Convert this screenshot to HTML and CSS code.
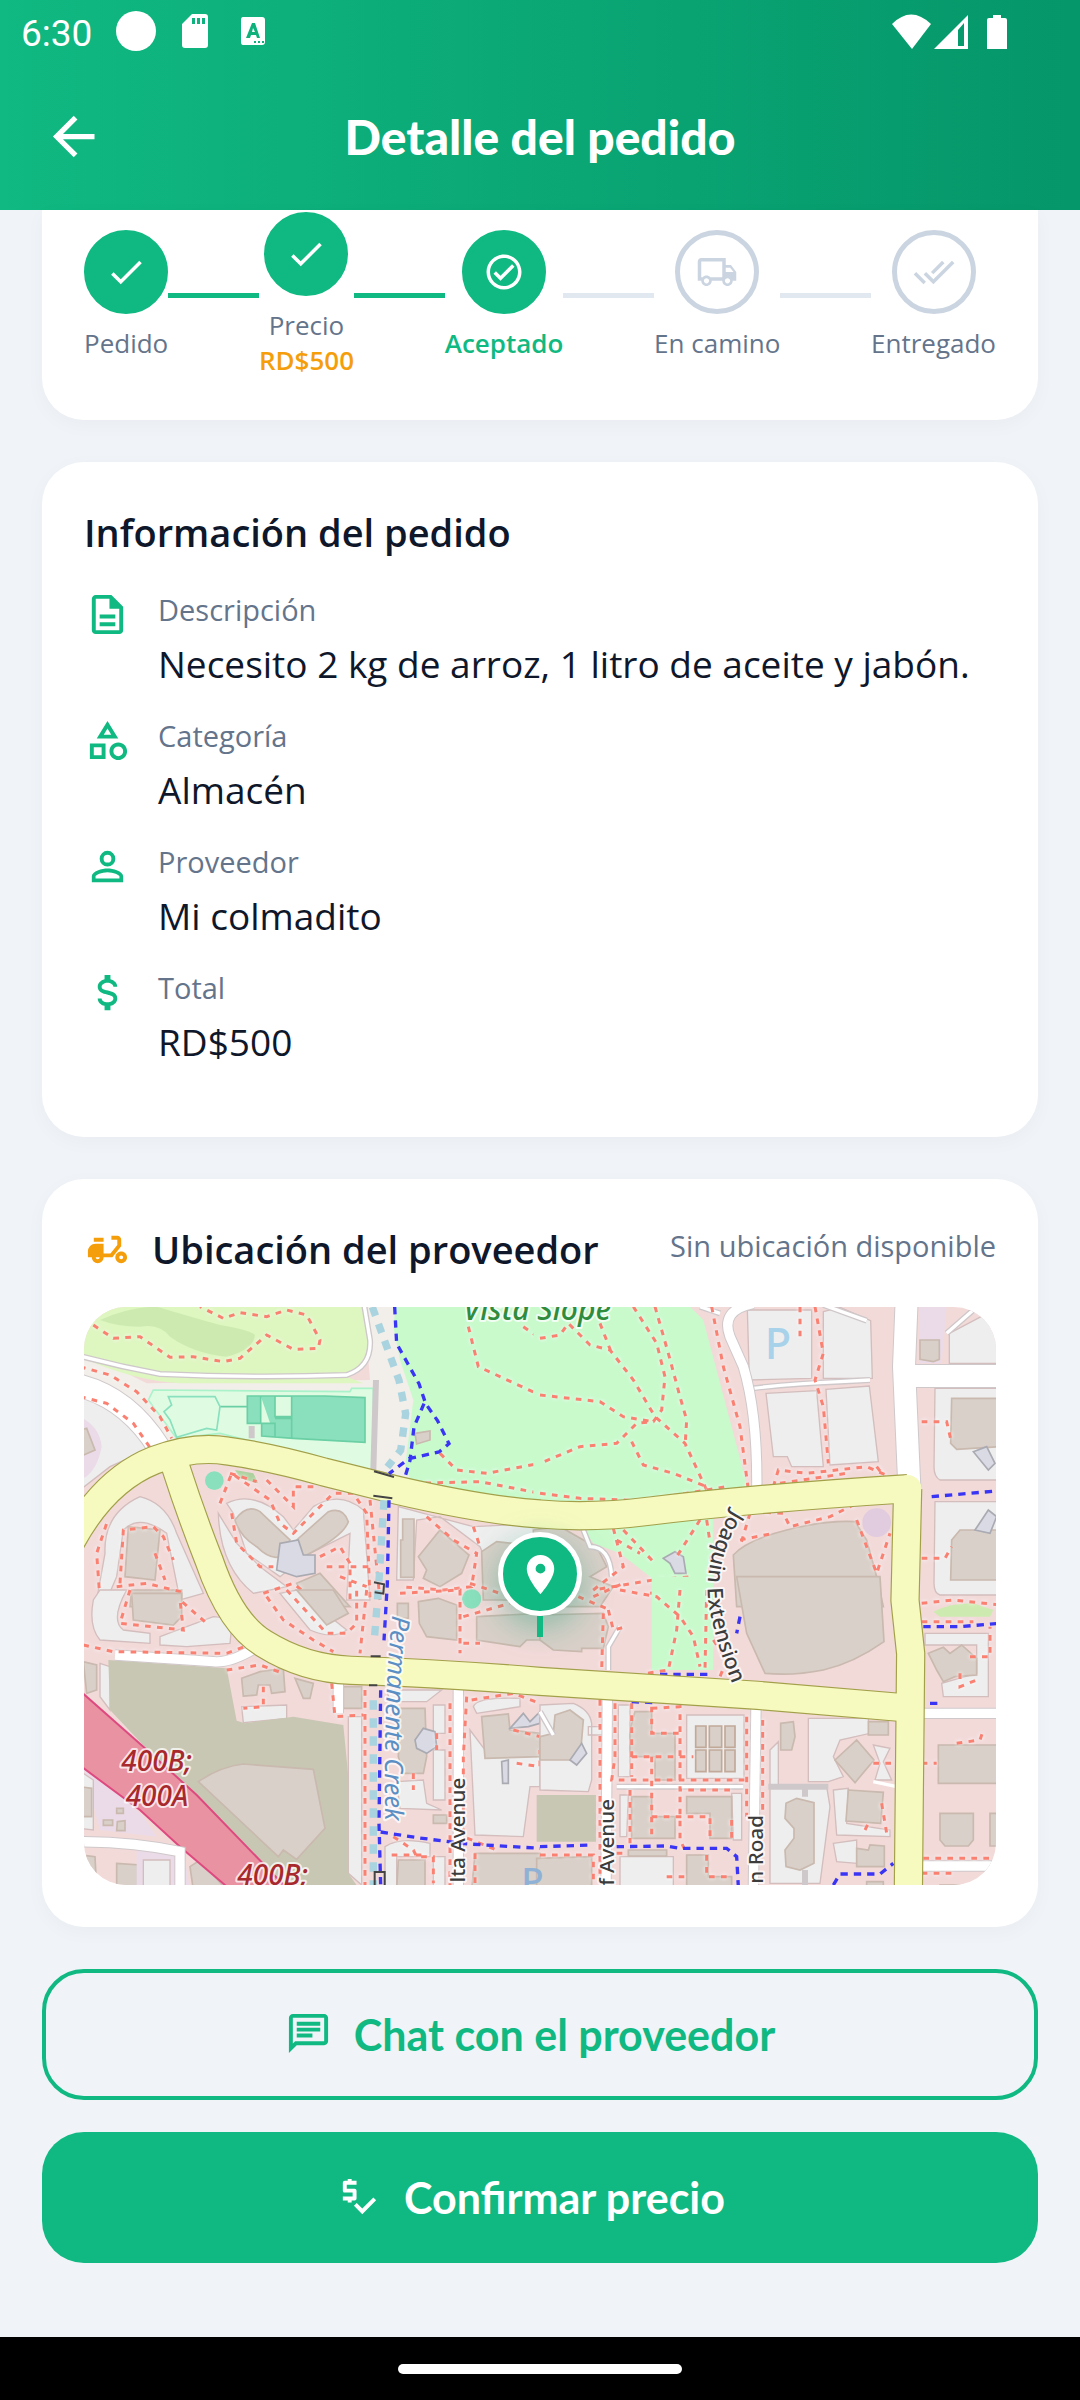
FILE: index.html
```html
<!DOCTYPE html>
<html lang="es">
<head>
<meta charset="utf-8">
<meta name="viewport" content="width=device-width, initial-scale=1">
<title>Detalle del pedido</title>
<link rel="stylesheet" href="styles.css">
</head>
<body>
<header class="header">
  <div class="status">
    <span class="status-time">6:30</span>
    <svg class="status-left" viewBox="0 0 156 44" aria-hidden="true">
      <circle cx="20" cy="21" r="20"/>
      <path fill-rule="evenodd" d="M76 4h13q3 0 3 3v28q0 3-3 3H69q-3 0-3-3V14zM76 8v6h3V8zm5 0v6h3V8zm5 0v6h3V8z"/>
      <path fill-rule="evenodd" d="M127 7h19q3 0 3 3v22q0 3-3 3h-19q-2 0-2-3V10q0-3 2-3zM136 13l-6 15h4l1-3h5l1 3h3l-5-15zm1 5l2 4h-3zM138 31v2h2v-2zm4 0v2h2v-2zm4 0v2h2v-2z"/>
    </svg>
    <svg class="status-right" viewBox="0 0 116 36" aria-hidden="true">
      <path d="M0 10Q19-9 39 10L20 35z"/>
      <path fill-rule="evenodd" d="M76 1v34H42zM66 16v16h6V9z"/>
      <path d="M101 1h8v3h4q2 0 2 2v29H95V6q0-2 2-2h4z"/>
    </svg>
  </div>
  <div class="appbar">
    <button class="back" aria-label="Volver"><svg class="icon-lg" viewBox="0 0 24 24"><path d="M20 11V13H8L13.5 18.5L12.08 19.92L4.16 12L12.08 4.08L13.5 5.5L8 11H20Z"/></svg></button>
    <h1 class="title">Detalle del pedido</h1>
  </div>
</header>

<main class="content">
  <section class="card card-steps">
    <ol class="steps">
      <li class="step"><span class="dot"><svg class="icon-sm" viewBox="0 0 24 24"><path d="M21 7L9 19L3.5 13.5L4.91 12.09L9 16.17L19.59 5.59L21 7Z"/></svg></span><span class="step-name">Pedido</span></li>
      <li class="line line-done" aria-hidden="true"></li>
      <li class="step"><span class="dot"><svg class="icon-sm" viewBox="0 0 24 24"><path d="M21 7L9 19L3.5 13.5L4.91 12.09L9 16.17L19.59 5.59L21 7Z"/></svg></span><span class="step-name">Precio</span><span class="step-price">RD$500</span></li>
      <li class="line line-done" aria-hidden="true"></li>
      <li class="step step-current"><span class="dot"><svg class="icon-sm" viewBox="0 0 24 24"><path d="M12 2C6.5 2 2 6.5 2 12S6.5 22 12 22 22 17.5 22 12 17.5 2 12 2M12 20C7.59 20 4 16.41 4 12S7.59 4 12 4 20 7.59 20 12 16.41 20 12 20M16.59 7.58L10 14.17L7.41 11.59L6 13L10 17L18 9L16.59 7.58Z"/></svg></span><span class="step-name">Aceptado</span></li>
      <li class="line" aria-hidden="true"></li>
      <li class="step step-todo"><span class="dot"><svg class="icon-sm" viewBox="0 0 24 24"><path d="M18 18.5C18.83 18.5 19.5 17.83 19.5 17C19.5 16.17 18.83 15.5 18 15.5C17.17 15.5 16.5 16.17 16.5 17C16.5 17.83 17.17 18.5 18 18.5M19.5 9.5H17V12H21.46L19.5 9.5M6 18.5C6.83 18.5 7.5 17.83 7.5 17C7.5 16.17 6.83 15.5 6 15.5C5.17 15.5 4.5 16.17 4.5 17C4.5 17.83 5.17 18.5 6 18.5M20 8L23 12V17H21C21 18.66 19.66 20 18 20C16.34 20 15 18.66 15 17H9C9 18.66 7.66 20 6 20C4.34 20 3 18.66 3 17H1V6C1 4.89 1.89 4 3 4H17V8H20M3 6V15H3.76C4.31 14.39 5.11 14 6 14C6.89 14 7.69 14.39 8.24 15H15V6H3Z"/></svg></span><span class="step-name">En camino</span></li>
      <li class="line" aria-hidden="true"></li>
      <li class="step step-todo"><span class="dot"><svg class="icon-sm" viewBox="0 0 24 24"><path d="M.41 13.41L6 19L7.41 17.58L1.83 12M22.24 5.58L11.66 16.17L7.5 12L6.07 13.41L11.66 19L23.66 7M18 7L16.59 5.58L10.24 11.93L11.66 13.34L18 7Z"/></svg></span><span class="step-name">Entregado</span></li>
    </ol>
  </section>

  <section class="card">
    <h2 class="heading">Información del pedido</h2>
    <dl class="details">
      <div class="detail">
        <svg class="icon" viewBox="0 0 24 24" aria-hidden="true"><path d="M8 16h8v2H8zm0-4h8v2H8zm6-10H6c-1.100 0-2 .9-2 2v16c0 1.100.89 2 1.990 2H18c1.100 0 2-.9 2-2V8l-6-6zm4 18H6V4h7v5h5v11z"/></svg>
        <dt class="label">Descripción</dt>
        <dd class="value">Necesito 2 kg de arroz, 1 litro de aceite y jabón.</dd>
      </div>
      <div class="detail">
        <svg class="icon" viewBox="0 0 24 24" aria-hidden="true"><path d="M11 13.500V21.500H3V13.500H11M9 15.500H5V19.500H9V15.500M12 2L17.500 11H6.500L12 2M12 5.860L10.080 9H13.920L12 5.860M17.500 13C20 13 22 15 22 17.500C22 20 20 22 17.500 22C15 22 13 20 13 17.500C13 15 15 13 17.500 13M17.500 15A2.500 2.500 0 0 0 15 17.500A2.500 2.500 0 0 0 17.500 20A2.500 2.500 0 0 0 20 17.500A2.500 2.500 0 0 0 17.500 15Z"/></svg>
        <dt class="label">Categoría</dt>
        <dd class="value">Almacén</dd>
      </div>
      <div class="detail">
        <svg class="icon" viewBox="0 0 24 24" aria-hidden="true"><path d="M12 4A4 4 0 0 1 16 8A4 4 0 0 1 12 12A4 4 0 0 1 8 8A4 4 0 0 1 12 4M12 6A2 2 0 0 0 10 8A2 2 0 0 0 12 10A2 2 0 0 0 14 8A2 2 0 0 0 12 6M12 13C14.670 13 20 14.330 20 17V20H4V17C4 14.330 9.330 13 12 13M12 14.900C9.030 14.900 5.900 16.360 5.900 17V18.100H18.100V17C18.100 16.360 14.970 14.900 12 14.900Z"/></svg>
        <dt class="label">Proveedor</dt>
        <dd class="value">Mi colmadito</dd>
      </div>
      <div class="detail">
        <svg class="icon" viewBox="0 0 24 24" aria-hidden="true"><path d="M7 15H9C9 16.080 10.370 17 12 17C13.630 17 15 16.080 15 15C15 13.900 13.960 13.500 11.760 12.970C9.640 12.440 7 11.780 7 9C7 7.210 8.470 5.690 10.500 5.180V3H13.500V5.180C15.530 5.690 17 7.210 17 9H15C15 7.920 13.630 7 12 7C10.370 7 9 7.920 9 9C9 10.100 10.040 10.500 12.240 11.030C14.360 11.560 17 12.220 17 15C17 16.790 15.530 18.310 13.500 18.820V21H10.500V18.820C8.470 18.310 7 16.790 7 15Z"/></svg>
        <dt class="label">Total</dt>
        <dd class="value">RD$500</dd>
      </div>
    </dl>
  </section>

  <section class="card">
    <div class="location">
      <svg class="icon icon-moped" viewBox="0 0 24 24" aria-hidden="true"><path fill-rule="evenodd" d="M19 7C19 5.900 18.100 5 17 5H14V7H17V9.650L13.500 14H10V9H6C3.790 9 2 10.790 2 13V16H4C4 17.660 5.340 19 7 19S10 17.660 10 16H14.500L19 10.350V7M7 17C6.450 17 6 16.550 6 16H8C8 16.550 7.550 17 7 17M5 6H10V8H5V6M19 13C17.340 13 16 14.340 16 16S17.340 19 19 19 22 17.660 22 16 20.660 13 19 13M19 17C18.450 17 18 16.550 18 16S18.450 15 19 15 20 15.450 20 16 19.550 17 19 17Z"/></svg>
      <h2 class="heading">Ubicación del proveedor</h2>
      <span class="note">Sin ubicación disponible</span>
    </div>
    <div class="map">
      <svg class="map-art" viewBox="0 0 2736 1734" preserveAspectRatio="xMidYMid slice" role="img" aria-label="Mapa">
        <rect class="land" width="2736" height="1734"/>

        <!-- north-west: golf course, sports pitches, campus -->
        <g transform="translate(-12 -21)">
          <path class="sand" d="M0 150L200 250L870 240L850 0H1010L1000 560L860 520L200 440L0 260Z"/>
          <path class="grass" d="M0 0H850L868 150Q850 220 800 230L850 250H300Q150 240 0 170Z"/>
          <path class="rough" d="M60 60Q150 20 230 20Q330 50 420 75Q510 90 525 105Q520 150 440 170Q340 160 270 110Q240 70 180 80Q110 80 60 60Z"/>
          <path class="park-soft" d="M205 300L220 270L810 275L815 265H880V520L740 480L420 400L290 415Z"/>
          <path class="park" d="M950 0H1420V640L1000 560L975 500L1000 300L960 180L940 80Z"/>
          <path class="pitch" d="M502 288H735L855 293V427L640 415L545 408V370H502ZM542 288V370H585V412M585 290V350H635V290M585 355H635V415M420 320H500"/>
          <path class="pitch-line" d="M265 290H405L420 320L410 390L380 385L290 412L270 360L252 335L275 315Z"/>
          <path class="edge" d="M0 168Q120 200 240 222Q520 235 800 225Q875 200 870 120L850 0"/>
          <path class="lane-thin" d="M0 168Q120 200 240 222Q520 235 800 225Q875 200 870 120L850 0"/>
          <path class="edge" d="M888 240L880 510M515 378V415"/>
          <path class="lot" d="M0 290Q120 310 170 400L200 450L90 500L0 570ZM75 760Q70 640 180 590Q260 610 290 700L370 880L300 900L260 700Q180 640 130 690L110 830L80 900H50Z"/>
          <path class="lot" d="M440 610Q520 570 610 650L640 690L700 620Q780 570 850 630L870 900H800L810 700L690 760L600 830L500 760L460 640ZM415 640L470 730L540 800L620 860L520 880Q420 800 415 640Z"/>
          <path class="lot" d="M955 620L1180 680L1380 670V900H1270L1200 740L1080 650L1010 660L1000 840H950Z"/>
          <path class="mall" d="M0 350Q60 380 65 440Q50 520 0 540ZM30 420"/>
          <path class="building" d="M0 390L20 385L45 450L0 470ZM145 680L240 690L225 840L135 830ZM155 870H305V920H150ZM465 660Q500 610 540 635L630 720L600 770Q570 780 530 740Q480 710 465 660ZM650 720L745 635Q790 620 805 665Q790 710 670 770ZM650 850L720 820L810 920H690Z"/>
          <path class="building" d="M968 657H1002V832H962V720H968ZM1015 770L1080 690L1167 765L1145 820L1080 860L1030 835L1040 810ZM1205 755L1250 725L1340 735V900H1210Z"/>
          <path class="service" d="M600 730L655 720L670 765H705V820L650 830L590 810Z"/>
          <path class="building" d="M1005 400L1050 393V420L1010 432Z"/>
          <circle class="tree" cx="403" cy="542" r="28"/>
          <circle class="tree" cx="1175" cy="895" r="28"/>
          <path class="wood" d="M465 510L520 520L535 550L480 535Z"/>
          <path class="edge-wide" d="M-10 255Q140 290 235 440"/>
          <path class="lane-wide" d="M-10 255Q140 290 235 440"/>
          <path class="path" d="M40 75L100 115L180 110L270 172L340 170L430 185L480 175L560 105L640 148L715 145L720 120L680 45L620 30L560 50L480 38L430 55L360 20"/>
          <path class="path" d="M0 200L90 225L170 275L240 350L275 415M0 290L80 310L160 370L215 450M60 900L50 760L80 670M120 850L130 690L220 680L250 710L280 780M110 860L200 850L320 880M225 760L255 840"/>
          <path class="path" d="M420 610L455 520L570 600L600 670L640 700L680 660L760 580L820 580L860 640L870 900M455 640L470 730L540 800L580 800M720 770L780 740L810 790V900M740 800L870 800M560 540L640 620V560L700 560M550 880L640 850L700 900M870 600L900 900M780 830L860 860M450 520L530 545M1040 650L1120 720L1190 760L1175 860L1090 870L960 860M1180 680L1200 740M1170 850L1260 880"/>
          <path class="path" d="M1165 80L1195 200L1380 285M1080 460L1130 510L1220 520L1380 490M1000 550L1200 545L1380 580M1330 80L1380 115"/>
        </g>

        <!-- north-east: park and car parks -->
        <g transform="translate(1368 -21)">
          <path class="park" d="M-20 0H430L490 60L625 570L200 610H-20Z"/>
          <path class="park" d="M130 690L520 650V900H420L240 760L160 730Z"/>
          <path class="lot" d="M622 30H815V235L628 240ZM850 35L900 22L992 62L997 235L850 235ZM678 280L830 272L850 500H755L742 470H700ZM858 268L988 258L1015 485L870 495ZM1228 190V100L1380 20V190ZM1185 265H1380V540H1200Q1182 530 1182 500ZM1185 605H1380V885H1200Q1182 880 1182 850Z"/>
          <path class="mall" d="M1140 20H1220L1205 190H1140Z"/>
          <path class="building" d="M1140 120H1198V178L1180 185L1140 178ZM1235 295H1380V440L1250 448L1232 430ZM1235 720L1260 690H1380V840H1232ZM580 765Q620 720 740 690Q860 660 945 665L980 720L1010 830L1030 920H590Z"/>
          <path class="building" d="M-20 690L60 680L130 720L170 740L200 800L150 830L220 860L180 920H-20Z"/>
          <path class="service" d="M370 775L405 755L430 770L438 820H405L390 790ZM1300 455L1340 440L1365 490L1345 510ZM1305 690L1345 630L1370 650L1350 700Z"/>
          <circle class="plaza" cx="1010" cy="668" r="43"/>
          <path class="edge" d="M480 20L540 40M640 265Q760 250 900 245L990 240M850 15L980 62M130 690L150 740Q210 740 215 830M1220 100L1300 30"/>
          <path class="lane-thin" d="M480 20L540 40M640 265Q760 250 900 245L990 240M850 15L980 62M130 690L150 740Q210 740 215 830M1220 100L1300 30"/>
          <path class="edge-road" d="M650 590Q655 350 610 200L570 110Q540 30 640 10"/>
          <path class="lane-road" d="M650 590Q655 350 610 200L570 110Q540 30 640 10"/>
          <path class="edge-wide" d="M1100 0L1092 200L1108 560M1110 228H1400"/>
          <path class="lane-wide" d="M1100 0L1092 200L1108 560M1110 228H1400"/>
          <path class="path" d="M0 115L60 105L85 70L150 135L210 150L280 240L345 350L435 430L500 570M280 20L350 130L375 230L365 330L340 365L290 370L230 430L120 440L0 490M345 20L385 160L420 290L440 360L435 440M180 70L215 160M0 285L180 305L250 350L340 365M275 425L310 495L400 520L500 560M515 20L550 200L600 380L625 570"/>
          <path class="path" d="M0 580L120 595L300 602L440 580L560 560M780 20V120M825 20L850 160L825 240L850 320L865 490M700 560L715 510L800 520L980 500L1050 530M720 550L920 520M1010 500L1040 540M640 635L730 640L750 680L870 650L950 610M950 660L1010 820L1050 700M1145 365H1220L1235 430M1145 775H1215L1235 740M600 720L700 700M630 640L600 740"/>
          <path class="path" d="M220 685L250 800L160 870L340 840L460 830M250 690L345 790M480 660L410 770M500 660L515 760L495 900M330 880L420 870M230 720L300 760M160 890L250 850"/>
          <path class="cycle" d="M1175 590L1380 572M550 645L590 640"/>
        </g>

        <!-- south-west: freeway and depot -->
        <g transform="translate(-12 849)">
          <path class="lot" d="M60 0H140Q90 90 130 120L210 130V160L60 150Q25 110 40 30ZM240 140L400 80Q440 80 455 110L450 160L320 170L240 165ZM600 10L650 0L800 120Q760 150 690 120ZM60 220L90 230V360L60 320ZM485 350L620 345V385L490 398ZM805 380H845V885L805 850ZM1060 345H1095V430H1060ZM1060 480H1095V630H1060ZM950 575L1030 570L1040 640L1085 660L960 655ZM1180 350Q1190 320 1320 325L1320 350L1190 370ZM1170 420L1230 500L1380 490V590H1350L1330 740L1185 735ZM920 300H1085L1040 335H930ZM915 770Q960 740 1050 760V800H950V900H915ZM1060 800H1095V900H1060Z"/>
          <path class="depot" d="M85 210L440 235L470 392L495 400L640 380L790 405L805 560V850L840 900H600L90 360Z"/>
          <path class="building" d="M355 575Q420 530 490 522L700 538L735 715L650 808L610 780L595 800ZM155 10H305V80L280 105L160 90ZM485 265L540 245L610 235L615 305L575 310L570 285H535L530 315L490 318ZM650 0H760L805 70L740 105ZM790 290H845V355H790ZM952 40H985V85H952ZM1015 35L1075 25L1130 45V150L1040 140L1018 100ZM1190 80L1380 70V150L1340 150L1320 170L1190 150ZM960 355L1035 355L1040 500L1030 550L970 550L955 500ZM1205 380L1285 372L1290 420L1380 430V500L1215 505ZM955 810H1035V900H950ZM1185 790H1380V900H1175ZM10 215L50 225V300L20 310ZM110 820L180 825V900H110ZM1060 675H1100V700H1060ZM645 265L700 280L690 325L670 325Z"/>
          <path class="mall" d="M12 540L60 560L190 680L230 740L60 720ZM170 770L310 780L330 900H170Z"/>
          <path class="lot" d="M190 810H270V900H190ZM10 550L40 570V720L0 715Z"/>
          <path class="building" d="M0 590L35 595V680H0ZM70 690H98V706H70ZM110 655H130V670H110ZM330 830L360 810L440 900H340ZM0 795L45 800L50 900H0ZM112 695L135 692V722H110Z"/>
          <path class="service" d="M1005 450L1030 415L1065 425L1070 470L1040 490L1010 475ZM1265 515L1285 510V580H1268ZM1290 415L1330 370L1350 395L1380 365V400L1345 410Z"/>
          <circle class="tree" cx="1175" cy="28" r="28"/>
          <path class="freeway" d="M-20 285L190 470L350 615L640 915H470L300 770L180 660L-20 512Z"/>
          <path class="edge-road" d="M105 195L400 215Q450 220 525 175M-10 755Q160 755 300 785V900M1135 290V900M775 280V370"/>
          <path class="lane-road" d="M105 195L400 215Q450 220 525 175M-10 755Q160 755 300 785V900M1135 290V900M775 280V370"/>
          <path class="path" d="M10 165L100 185L440 190L520 160M150 0L120 100L310 120L300 30L380 100M440 240L540 225L610 250M550 290V350L490 355M560 20L610 90L700 150L760 185M620 0L740 130L800 130L830 100V0M860 0L840 190M960 10L1140 0V190M1150 80L1290 40M1150 160H1200M755 280L765 380L850 375M855 300V890M1110 340V900M1160 320L1150 500V740L1250 780M1175 330L1300 310L1380 340M1300 420L1380 440M1310 520L1380 530V480M940 740L1000 780L1010 800L1060 800V880M935 795H1040M1000 550V600M1070 430V480M1185 790V890"/>
        </g>

        <!-- south-east: offices -->
        <g transform="translate(1368 849)">
          <path class="park" d="M335 -40H480L515 240H335ZM420 -40H520V240H480Z"/>
          <path class="lot" d="M0 345L100 340Q150 360 155 400V570L145 605L0 600ZM145 410H190V435H145ZM235 345H270V560H235ZM440 375H612V565H440ZM805 385H985L990 430L900 450L880 500L910 560L865 575H805ZM690 480L715 455V590H860L870 650L840 880H690ZM880 600L925 595L920 700L1050 720V740L890 735ZM880 760L950 750V820L890 815ZM1155 130H1345V320H1210L1205 280L1310 250V165H1155ZM240 800H400V900H240ZM575 610H605V750H580ZM240 615H265L260 740H240ZM1000 465L1050 475L1030 515L1055 570H1005L1020 520Z"/>
          <path class="depot" d="M-10 615H168V755H-10Z"/>
          <path class="building" d="M0 75L190 70L205 110L190 175H125V185L40 180L0 150ZM590 -40H1020L1032 155Q940 220 850 240Q760 258 675 250L620 130ZM45 375L90 360L130 390L120 510H0V440L40 430ZM285 365H335V430H405V570H345V500H270V420ZM275 620H335V680H405V745H275ZM440 620H575V745H510V670H440ZM722 400L760 395L765 440L755 480H722ZM885 510L950 450L1002 510L945 578ZM985 395H1045V435H985ZM925 600L1030 607L1022 700L918 693ZM950 775L985 780L990 765L1033 768V830H950ZM738 640L770 625L822 638V820L780 840L738 830L735 780L762 745V715L735 685ZM1165 190L1210 172L1230 190L1265 165L1310 205V255L1245 260L1210 275L1190 240ZM1195 465H1380V580H1195ZM1200 670H1300V750L1285 768H1215L1200 750ZM1350 670H1380V768H1350ZM-10 805L155 800V900H-10ZM440 795H505V860H575V900H440ZM265 780H380V798H265ZM980 875H1030V900H980ZM1200 885H1260V900H1200Z"/>
          <path class="cell" d="M467 408H498V472H467ZM508 408H545V472H508ZM555 408H585V472H555ZM467 480H498V545H467ZM508 480H545V545H508ZM555 480H585V545H555Z"/>
          <path class="rough" d="M1180 65Q1230 40 1300 40L1360 60L1350 80H1200Z"/>
          <path class="service" d="M90 510L125 460L140 490L110 525Z"/>
          <path class="edge" d="M240 110L205 170V240M230 590H610M685 590H865M795 590V620M795 840V885M0 365L40 435"/>
          <path class="lane-thin" d="M240 110L205 170V240M230 590H610M1000 575L1070 590M0 365L40 435"/>
          <path class="edge-road" d="M202 320L198 900M648 350L640 900M1145 370H1400M1145 828H1380"/>
          <path class="lane-road" d="M202 320L198 900M648 350L640 900M1145 370H1400M1145 828H1380"/>
          <path class="path" d="M190 70L185 240M205 60L220 120L260 110M225 340V500L215 570H615M180 330V880M275 340V560M335 350V430H435M275 500H460M335 500V680H510V750M335 355L420 350V600H580M270 600V760M335 680V745M420 620V750L440 790M575 690V750M620 380V680M668 390V660M500 795V860H575M380 860H440M230 790H260M0 795H160V880M115 20L210 60"/>
          <path class="path" d="M240 0L350 20L420 80L460 140L480 230M420 0L410 120L385 240L320 250M500 0L495 240M520 150L560 210L540 260M1145 40L1240 30L1380 45M1145 95H1300M1145 520H1190M1250 460L1320 450L1330 420M1150 805H1360M1145 850H1250M1025 640L1040 730M975 720L985 700M1000 520H1055M1290 200H1350V110M1260 250V290L1310 270"/>
          <path class="cycle" d="M0 770L160 765M230 770L380 768L420 775L560 775L590 800L595 890M880 885L900 852H1020L1060 820M1150 110H1260L1380 100M600 80L590 130M275 335L350 338M360 253H520M1170 340H1200"/>
        </g>

        <!-- main avenues -->
        <g class="avenue-edge">
          <path id="loop" d="M-40 705Q60 520 210 460Q330 415 430 432Q560 450 720 495L940 550Q1200 610 1368 621Q1520 635 1700 612Q2000 575 2471 545"/>
          <path id="branch" d="M275 480Q320 620 375 760Q440 950 540 1010Q660 1085 800 1090Q1080 1100 1368 1123L2020 1165L2471 1203"/>
          <path id="cross" d="M2471 545L2463 880L2480 1040L2473 1760"/>
        </g>
        <g class="avenue">
          <use href="#loop"/><use href="#branch"/><use href="#cross"/>
        </g>

        <!-- creek and cycle way -->
        <path class="creek" d="M865 0L905 110L945 220L965 320L950 430L910 480"/>
        <path class="creek" d="M900 580L885 820L870 1010M868 1180V1734"/>
        <path class="cycle" d="M932 0L938 110L1005 230L1025 290L1060 340L1095 410L1065 435L975 455L915 500M1020 290L990 360L978 460L960 520M915 580L910 830L900 1000M890 1150L885 1550L890 1734M890 1575L1000 1592L1140 1610L1368 1624"/>
        <path class="culvert" d="M870 493L930 510M868 566L925 574M870 826L900 832L898 860L872 856M860 1048H890M855 1135H880M872 1734V1695H902V1734"/>

        <path id="creek-name" class="guide" d="M925 925Q895 1180 905 1640"/>
        <path id="joaquin" class="guide" d="M1944 608Q1840 780 1884 940Q1905 1040 1966 1180"/>
        <text class="map-text water-text" font-size="76"><textPath href="#creek-name">Permanente Creek</textPath></text>
        <text class="map-text road-text" font-size="64"><textPath href="#joaquin">Joaquin Extension</textPath></text>
        <text class="map-text road-text" font-size="62" text-anchor="end" transform="translate(1143 1412) rotate(-90)">lta Avenue</text>
        <text class="map-text road-text" font-size="62" text-anchor="end" transform="translate(1590 1476) rotate(-90)">f Avenue</text>
        <text class="map-text road-text" font-size="62" text-anchor="end" transform="translate(2038 1524) rotate(-90)">n Road</text>
        <text class="map-text park-text" font-size="90" x="1138" y="38">Vista Slope</text>
        <text class="map-text ref-text" font-size="84" x="112" y="1392">400B;</text>
        <text class="map-text ref-text" font-size="84" x="125" y="1496">400A</text>
        <text class="map-text ref-text" font-size="84" x="460" y="1734">400B;</text>
        <text class="parking" font-size="130" x="2042" y="155">P</text>
        <text class="parking parking-box" font-size="110" x="1312" y="1760">P</text>
      </svg>
      <div class="pin"><span class="pin-head"><svg class="icon" viewBox="0 0 24 24"><path d="M12 11.500A2.500 2.500 0 0 1 9.500 9A2.500 2.500 0 0 1 12 6.500A2.500 2.500 0 0 1 14.500 9A2.500 2.500 0 0 1 12 11.500M12 2A7 7 0 0 0 5 9C5 14.250 12 22 12 22C12 22 19 14.250 19 9A7 7 0 0 0 12 2Z"/></svg></span><span class="pin-stem"></span></div>
    </div>
  </section>

  <div class="actions">
    <button class="btn btn-outline"><svg class="icon" viewBox="0 0 24 24" aria-hidden="true"><path d="M4 4h16v12H5.170L4 17.170V4m0-2c-1.100 0-1.990.9-1.990 2L2 22l4-4h14c1.100 0 2-.9 2-2V4c0-1.100-.9-2-2-2H4zm2 10h8v2H6v-2zm0-3h12v2H6V9zm0-3h12v2H6V6z"/></svg>Chat con el proveedor</button>
    <button class="btn btn-solid"><svg class="icon" viewBox="0 0 24 24" aria-hidden="true"><path d="M11 13V9c0-.55-.45-1-1-1H6V6h5V4H8.500V3h-2v1H5c-.55 0-1 .45-1 1v4c0 .55.45 1 1 1h4v2H4v2h2.500v1h2v-1H10c.55 0 1-.45 1-1zM19.590 12.520l-5.660 5.650l-2.830-2.830l-1.410 1.420L13.930 21L21 13.930z"/></svg>Confirmar precio</button>
  </div>
</main>

<footer class="navbar"><span class="handle"></span></footer>
</body>
</html>
```
FILE: styles.css
```css
* { box-sizing: border-box; }

body {
  margin: 0;
  min-height: 100vh;
  display: flex;
  flex-direction: column;
  background: #f0f4f9;
  color: #0f172a;
  font-family: "Open Sans", "Noto Sans", sans-serif;
}

svg { display: block; fill: currentColor; }
button { font: inherit; cursor: pointer; }
.icon { width: 47px; height: 47px; flex: none; color: #10b981; }
.icon-sm { width: 42px; height: 42px; }
.icon-lg { width: 63px; height: 63px; }

/* Header */
.header {
  background: linear-gradient(90deg, #10b981, #059669);
  color: #fff;
}
.status {
  height: 63px;
  padding: 4px 72px 0 21px;
  display: flex;
  align-items: center;
}
.status-time { font: 37px/59px Roboto, sans-serif; width: 95px; }
.status-left { width: 156px; height: 44px; margin-bottom: 4px; }
.status-right { width: 116px; height: 36px; margin: 0 0 4px auto; }
.appbar {
  height: 147px;
  padding: 0 42px;
  display: grid;
  grid-template-columns: 63px 1fr 63px;
  align-items: center;
}
.back { padding: 0; border: 0; background: none; color: #fff; }
.title {
  margin: 0;
  text-align: center;
  font: 900 48px/60px Lato, sans-serif;
}

/* Cards */
.content {
  flex: 1;
  padding: 0 42px 42px;
  display: flex;
  flex-direction: column;
  gap: 42px;
}
.card {
  padding: 42px;
  border-radius: 42px;
  background: #fff;
  box-shadow: 0 5px 20px rgba(15, 23, 42, .03);
}
.card-steps { padding-top: 2px; border-radius: 0 0 42px 42px; }
.heading { margin: 0; font-size: 38px; line-height: 56px; font-weight: 600; }

/* Progress */
.steps {
  margin: 0;
  padding: 0;
  list-style: none;
  display: flex;
  align-items: center;
}
.step {
  display: flex;
  flex-direction: column;
  align-items: center;
  font-size: 26px;
  line-height: 35px;
  color: #64748b;
}
.dot {
  width: 84px;
  height: 84px;
  margin-bottom: 12px;
  border: 5px solid #10b981;
  border-radius: 50%;
  background: #10b981;
  color: #fff;
  display: grid;
  place-items: center;
}
.step-price { color: #f59e0b; font-weight: 600; }
.step-current .step-name { color: #10b981; font-weight: 600; }
.step-todo .dot { border-color: #cbd5e1; background: #fff; color: #cbd5e1; }
.line { flex: 1; height: 5px; background: #e2e8f0; }
.line-done { background: #10b981; }

/* Details */
.details { margin: 31px 0 0; }
.detail {
  display: grid;
  grid-template-columns: 47px 1fr;
  column-gap: 27px;
  row-gap: 9px;
  margin-bottom: 27px;
}
.detail .icon { grid-row: 1 / 3; }
.label { line-height: 38px; font-size: 29px; color: #64748b; }
.value { margin: 0; line-height: 52px; font-size: 37px; }

/* Location */
.location { display: flex; align-items: center; gap: 21px; margin-bottom: 30px; }
.icon-moped { color: #f59e0b; }
.note { margin: 0 0 6px auto; font-size: 29px; line-height: 38px; color: #64748b; }
.map {
  position: relative;
  aspect-ratio: 912 / 578;
  border-radius: 42px;
  overflow: hidden;
}
.map-art { width: 100%; height: 100%; }
.pin {
  position: absolute;
  left: 50%;
  top: 39%;
  transform: translateX(-50%);
  display: flex;
  flex-direction: column;
  align-items: center;
}
.pin-head {
  width: 84px;
  height: 84px;
  border: 5px solid #fff;
  border-radius: 50%;
  background: #10b981;
  box-shadow: 0 10px 32px rgba(16, 150, 110, .4);
  display: grid;
  place-items: center;
}
.pin-head .icon { color: #fff; }
.pin-stem { width: 6px; height: 21px; background: #10b981; }

/* Map features */
.land { fill: #f2dad9; }
.sand { fill: #f2eee9; }
.grass { fill: #def6c0; }
.rough { fill: #cdebb0; }
.park { fill: #c8facc; }
.park-soft { fill: #dffce2; stroke: #aaf2ca; stroke-width: 5; }
.pitch { fill: #8ae0bd; stroke: #6acfa4; stroke-width: 5; }
.pitch-line { fill: none; stroke: #88e0be; stroke-width: 5; }
.wood { fill: #add19e; }
.tree { fill: #8ae0bd; }
.plaza { fill: #e0cbdf; }
.lot { fill: #eeeeee; stroke: #d3bdbd; stroke-width: 4; }
.mall { fill: #ebdbe8; }
.depot { fill: #c8c7b3; }
.building { fill: #d9d0c9; stroke: #c9b9ae; stroke-width: 5; }
.cell { fill: #d9d0c9; stroke: #c1a99a; stroke-width: 5; }
.service { fill: #dadae5; stroke: #aaaab2; stroke-width: 5; }
.freeway { fill: #e892a2; stroke: #de4a80; stroke-width: 6; }
.edge, .edge-road, .edge-wide { fill: none; stroke: #cfc8ca; stroke-width: 18; }
.lane-thin, .lane-road, .lane-wide { fill: none; stroke: #fff; stroke-width: 10; }
.edge-road { stroke-width: 34; }
.lane-road { stroke-width: 28; }
.edge-wide { stroke-width: 72; }
.lane-wide { stroke-width: 66; }
.edge-wide, .lane-wide { stroke-linejoin: round; }
.path {
  fill: none;
  stroke: #fa8072;
  stroke-width: 9;
  stroke-dasharray: 17 19;
  filter: drop-shadow(0 0 6px #fff);
}
.cycle { fill: none; stroke: #3a35f5; stroke-width: 10; stroke-dasharray: 22 18; }
.creek { fill: none; stroke: #a9d3de; stroke-width: 22; stroke-dasharray: 28 26; }
.culvert { fill: none; stroke: #444; stroke-width: 6; }
.avenue-edge { fill: none; stroke: #a3a04a; stroke-width: 88; stroke-linejoin: round; }
.avenue { fill: none; stroke: #f7fabf; stroke-width: 81; stroke-linecap: round; }
.guide { fill: none; }

/* Map lettering */
.map-text {
  font-family: "Noto Sans", sans-serif;
  paint-order: stroke;
  stroke: rgba(255, 255, 255, .75);
  stroke-width: 12;
  stroke-linejoin: round;
}
.road-text { fill: #3c3c3c; font-weight: 500; }
.water-text { fill: #5b8fc4; font-style: italic; }
.park-text { fill: #2f8c3c; font-style: italic; font-weight: 500; }
.ref-text { fill: #a8292d; font-style: italic; font-weight: 500; }
.parking { fill: #a8d2ea; font-family: "Noto Sans", sans-serif; font-weight: 500; }
.parking-box { fill: #8fb1d6; }

/* Actions */
.actions { display: flex; flex-direction: column; gap: 32px; }
.btn {
  height: 131px;
  padding: 0 20px 0 0;
  border-radius: 42px;
  display: flex;
  align-items: center;
  justify-content: center;
  gap: 22px;
  font: 700 43px/52px Lato, sans-serif;
}
.btn .icon { color: inherit; margin-bottom: 2px; }
.btn-outline { border: 4px solid #10b981; background: transparent; color: #10b981; }
.btn-solid { border: 0; background: #10b981; color: #fff; }

/* System navigation */
.navbar {
  height: 63px;
  background: #000;
  display: grid;
  place-items: center;
}
.handle { width: 284px; height: 10px; border-radius: 5px; background: #fff; }
```
